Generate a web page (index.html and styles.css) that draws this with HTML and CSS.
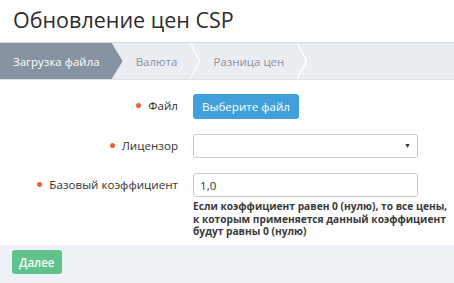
FILE: index.html
```html
<!DOCTYPE html>
<html lang="ru">
<head>
    <meta charset="UTF-8">
    <meta name="viewport" content="width=device-width, initial-scale=1.0">
    <title>Обновление цен CSP</title>
    <link rel="stylesheet" href="styles.css">
</head>
<body>
    <h1 class="page-title">Обновление цен CSP</h1>

    <div class="steps">
        <div class="step active">Загрузка файла</div>
        <div class="step">Валюта</div>
        <div class="step">Разница цен</div>
    </div>

    <form class="form">
        <div class="form-row">
            <label class="form-label required">Файл</label>
            <div class="form-control">
                <button type="button" class="btn btn-file">Выберите файл</button>
            </div>
        </div>
        <div class="form-row">
            <label class="form-label required">Лицензор</label>
            <div class="form-control">
                <div class="select">
                    <span class="select-arrow">&#9660;</span>
                </div>
            </div>
        </div>
        <div class="form-row">
            <label class="form-label required">Базовый коэффициент</label>
            <div class="form-control">
                <input type="text" class="text-input" value="1,0">
                <p class="hint">Если коэффициент равен 0 (нулю), то все цены, к которым применяется данный коэффициент будут равны 0 (нулю)</p>
            </div>
        </div>
    </form>

    <div class="footer">
        <button type="button" class="btn btn-next">Далее</button>
    </div>
</body>
</html>
```

FILE: styles.css
```css
body {
    margin: 0;
    font-family: "Open Sans", "Liberation Sans", sans-serif;
    color: #333;
    background: #fff;
}
.page-title {
    margin: 0;
    padding: 5px 13px 7px;
    font-size: 21.5px;
    line-height: 30px;
    font-weight: normal;
    color: #2d2d2d;
}
.steps {
    display: flex;
    height: 36px;
    background-color: #eaedf2;
    border-top: 1px solid #d6dae0;
    border-bottom: 1px solid #dfe3e8;
    overflow: hidden;
}
.step {
    position: relative;
    display: flex;
    align-items: center;
    padding: 0 12px 0 13px;
    margin-right: 11px;
    font-size: 11.5px;
    color: #8a929e;
}
.step::after {
    content: "";
    position: absolute;
    top: 0;
    left: 100%;
    width: 11px;
    height: 100%;
    background: #fff;
    clip-path: polygon(0 0, 1.5px 0, 100% 50%, 1.5px 100%, 0 100%, calc(100% - 1.5px) 50%);
}
.step.active {
    background-color: #8792a2;
    color: #fff;
}
.step.active::after {
    background: #8792a2;
    clip-path: polygon(0 0, 100% 50%, 0 100%);
}
.form {
    padding: 14px 0 7px;
}
.form-row {
    display: flex;
    align-items: flex-start;
    margin-bottom: 15px;
}
.form-row:last-child {
    margin-bottom: 0;
}
.form-label {
    width: 178px;
    flex-shrink: 0;
    text-align: right;
    font-size: 11.6px;
    line-height: 24px;
    color: #333;
}
.form-label.required::before {
    content: "";
    display: inline-block;
    width: 5px;
    height: 5px;
    margin-right: 7px;
    border-radius: 50%;
    background-color: #ec6038;
    vertical-align: 2px;
}
.form-control {
    margin-left: 15px;
    width: 225px;
}
.btn {
    border: none;
    border-radius: 3px;
    font-family: "Open Sans", "Liberation Sans", sans-serif;
    color: #fff;
    cursor: pointer;
}
.btn-file {
    display: block;
    height: 25px;
    padding: 0 9px;
    font-size: 11.6px;
    background-color: #41a0dc;
}
.select {
    position: relative;
    height: 22px;
    border: 1px solid #c7cbd2;
    border-radius: 3px;
}
.select-arrow {
    position: absolute;
    right: 6px;
    top: 6px;
    font-size: 7px;
    color: #333;
}
.text-input {
    display: block;
    box-sizing: border-box;
    width: 100%;
    height: 24px;
    margin: 0;
    padding: 0 6px;
    border: 1px solid #c7cbd2;
    border-radius: 3px;
    font-family: "Open Sans", "Liberation Sans", sans-serif;
    font-size: 11.6px;
    color: #333;
}
.hint {
    margin: 3px -33px 0 0;
    font-size: 10.2px;
    line-height: 12.5px;
    font-weight: bold;
    color: #3a3a3a;
}
.footer {
    padding: 5px 12px;
    height: 28px;
    background-color: #eef1f5;
}
.btn-next {
    height: 24px;
    padding: 0 7px;
    font-size: 11.6px;
    font-weight: 600;
    background-color: #60c38c;
}
```
